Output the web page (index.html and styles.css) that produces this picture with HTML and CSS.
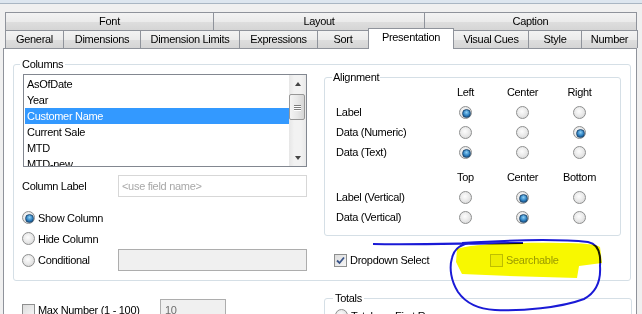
FILE: index.html
```html
<!DOCTYPE html>
<html>
	<head>
		<meta charset="UTF-8">
		<title>Chart Properties</title>
		<link rel="stylesheet" href="styles.css">
	</head>
	<body>
	<div class="shot">
		<div class="frame"></div>

		<div class="tabs">
			<div class="tab-row">
				<div class="tab w-font">Font</div>
				<div class="tab w-layout">Layout</div>
				<div class="tab w-caption">Caption</div>
			</div>
			<div class="tab-row lower">
				<div class="tab w-general">General</div>
				<div class="tab w-dim">Dimensions</div>
				<div class="tab w-limits">Dimension Limits</div>
				<div class="tab w-expr">Expressions</div>
				<div class="tab w-sort">Sort</div>
				<div class="tab w-pres active">Presentation</div>
				<div class="tab w-cues">Visual Cues</div>
				<div class="tab w-style">Style</div>
				<div class="tab w-number">Number</div>
			</div>
		</div>

		<div class="panel">
			<fieldset class="group columns">
				<legend>Columns</legend>
				<div class="group-body">
					<!-- 左侧：字段列表 -->
					<div class="col-left">
						<div class="listbox">
							<ul class="items">
								<li>AsOfDate</li>
								<li>Year</li>
								<li class="selected">Customer Name</li>
								<li>Current Sale</li>
								<li>MTD</li>
								<li>MTD-new</li>
							</ul>
							<div class="vscroll">
								<div class="sbtn up"></div>
								<div class="track"><div class="thumb"><i></i><i></i><i></i></div></div>
								<div class="sbtn down"></div>
							</div>
						</div>

						<div class="field-row label-row">
							<span class="field-name">Column Label</span>
							<div class="textbox hint">&lt;use field name&gt;</div>
						</div>

						<div class="opt first-opt"><span class="radio on"></span>Show Column</div>
						<div class="opt"><span class="radio"></span>Hide Column</div>
						<div class="opt cond">
							<span class="opt-label"><span class="radio"></span>Conditional</span>
							<div class="textbox grey"></div>
						</div>
					</div>

					<!-- 右侧：对齐方式 -->
					<div class="col-right">
						<fieldset class="group align">
							<legend>Alignment</legend>
							<div class="align-grid">
								<span></span><span class="head">Left</span><span class="head">Center</span><span class="head">Right</span>
								<span class="rowname">Label</span><span class="cell"><span class="radio on"></span></span><span class="cell"><span class="radio"></span></span><span class="cell"><span class="radio"></span></span>
								<span class="rowname">Data (Numeric)</span><span class="cell"><span class="radio"></span></span><span class="cell"><span class="radio"></span></span><span class="cell"><span class="radio on"></span></span>
								<span class="rowname">Data (Text)</span><span class="cell"><span class="radio on"></span></span><span class="cell"><span class="radio"></span></span><span class="cell"><span class="radio"></span></span>
							</div>
							<div class="align-grid second">
								<span></span><span class="head">Top</span><span class="head">Center</span><span class="head">Bottom</span>
								<span class="rowname">Label (Vertical)</span><span class="cell"><span class="radio"></span></span><span class="cell"><span class="radio on"></span></span><span class="cell"><span class="radio"></span></span>
								<span class="rowname">Data (Vertical)</span><span class="cell"><span class="radio"></span></span><span class="cell"><span class="radio on"></span></span><span class="cell"><span class="radio"></span></span>
							</div>
						</fieldset>

						<div class="checks">
							<div class="check first">
								<span class="box on"><svg width="11" height="11" viewBox="0 0 11 11"><path d="M2 5.5 L4.5 8 L9 2.5" fill="none" stroke="#3a5488" stroke-width="1.8"/></svg></span>Dropdown Select
							</div>
							<div class="check disabled"><span class="box"></span>Searchable</div>
						</div>
					</div>
				</div>
			</fieldset>

			<div class="bottom">
				<div class="max-row">
					<div class="check max-label"><span class="box"></span>Max Number (1 - 100)</div>
					<div class="textbox grey num">10</div>
				</div>
				<fieldset class="group totals">
					<legend>Totals</legend>
					<div class="opt"><span class="radio"></span>Totals on First Row</div>
				</fieldset>
			</div>
		</div>

		<!-- 截图上的手绘标注 -->
		<svg class="markup pen" width="642" height="314" viewBox="0 0 642 314">
			<path d="M373 244 C420 245 470 243 523 243" fill="none" stroke="#1a1ad6" stroke-width="2.2"/>
			<path d="M462 243 C510 240 560 239 588 242 C599 244 601 254 600 266 C601 281 597 292 584 299 C560 308 522 311 495 310 C476 309 465 302 458 292 C451 281 449 268 452 258 C454 250 458 246 468 243" fill="none" stroke="#1a1ad6" stroke-width="2"/>
		</svg>
		<svg class="markup marker" width="642" height="314" viewBox="0 0 642 314">
			<path d="M457 249 C470 244 520 242 560 243 C582 243 596 244 600 247 L602 263 L579 266 L577 278 C540 277 500 276 462 274 L456 262 Z" fill="#f8f800"/>
		</svg>
	</div>
	</body>
</html>
```

FILE: styles.css
```css
*{
	box-sizing: border-box;
}
body{
	margin: 0;
	background: #f0f0f0;
	font: 11px "Liberation Sans", Arial, sans-serif;
	letter-spacing: -0.3px;
	color: #000;
	overflow: hidden;
}
.shot{
	position: relative;
	width: 642px;
	height: 314px;
	overflow: hidden;
}
.frame{
	height: 4px;
	background: #dde6ef;
	border-bottom: 1px solid #a9b6c3;
}

/* 标签页 */
.tabs{
	margin: 8px 0 0 5px;
}
.tab-row{
	display: flex;
	align-items: flex-end;
	height: 18px;
}
.tab{
	flex: none;
	height: 18px;
	line-height: 17px;
	text-align: center;
	border: 1px solid #8f939b;
	border-bottom: none;
	background: linear-gradient(#f3f3f3, #ebebeb 50%, #dedede 51%, #d5d5d5);
	margin-left: -1px;
	white-space: nowrap;
}
.tab:first-child{
	margin-left: 0;
}
.tab-row.lower .tab.active{
	position: relative;
	height: 21px;
	margin-bottom: -1px;
	line-height: 17px;
	background: #fff;
}
.w-font{ width: 209px; }
.w-layout{ width: 212px; }
.w-caption{ width: 213px; }
.w-general{ width: 59px; }
.w-dim{ width: 78px; }
.w-limits{ width: 100px; }
.w-expr{ width: 79px; }
.w-sort{ width: 52px; }
.w-pres{ width: 86px; }
.w-cues{ width: 76px; }
.w-style{ width: 54px; }
.w-number{ width: 57px; }

/* 面板 */
.panel{
	margin-left: 3px;
	width: 634px;
	height: 280px;
	background: #fff;
	border: 1px solid #8f939b;
	padding: 9px 0 0 9px;
	overflow: hidden;
}
fieldset.group{
	margin: 0;
	padding: 0;
	min-width: 0;
	border: 1px solid #d5dfe6;
	border-radius: 3px;
}
fieldset.group legend{
	padding: 0 2px;
	margin-left: -2px;
	line-height: 12px;
}
.columns{
	width: 618px;
	padding: 0 9px 9px 8px !important;
}
.group-body{
	display: flex;
	gap: 17px;
}
.col-left{
	width: 285px;
}

/* 列表框 */
.listbox{
	display: flex;
	margin: 4px 0 0 1px;
	height: 93px;
	border: 1px solid #828790;
}
.items{
	flex: 1;
	list-style: none;
	margin: 0;
	padding: 1px 0 0 1px;
	overflow: hidden;
}
.items li{
	height: 16px;
	line-height: 16px;
	padding-left: 2px;
	white-space: nowrap;
}
.items li.selected{
	background: #3399ff;
	color: #fff;
}
.vscroll{
	width: 17px;
	display: flex;
	flex-direction: column;
	background: linear-gradient(90deg, #e6e6e6, #f2f2f2 30%, #f2f2f2 70%, #e9e9e9);
}
.sbtn{
	height: 17px;
	display: flex;
	align-items: center;
	justify-content: center;
}
.sbtn::before{
	content: "";
	border-left: 3.5px solid transparent;
	border-right: 3.5px solid transparent;
}
.sbtn.up::before{
	border-bottom: 4px solid #444;
}
.sbtn.down::before{
	border-top: 4px solid #444;
}
.track{
	flex: 1;
	padding: 2px 1px 0 0;
}
.thumb{
	height: 26px;
	border: 1px solid #979797;
	border-radius: 2px;
	background: linear-gradient(90deg, #f4f4f4, #e8e8e8 50%, #d6d6d6);
	display: flex;
	flex-direction: column;
	align-items: center;
	justify-content: center;
	gap: 1px;
}
.thumb i{
	display: block;
	width: 7px;
	height: 1px;
	background: #7d7d7d;
	box-shadow: 0 1px 0 #fff;
}

/* 字段行 */
.field-row{
	display: flex;
	align-items: center;
}
.label-row{
	margin-top: 8px;
}
.field-name{
	width: 96px;
}
.textbox{
	height: 22px;
	line-height: 20px;
	border: 1px solid #d7d7d7;
	padding-left: 3px;
	background: #fff;
}
.label-row .textbox,
.cond .textbox{
	width: 189px;
}
.textbox.hint{
	color: #a8a8a8;
}
.textbox.grey{
	background: #f0f0f0;
	border-color: #adadad;
	color: #6d6d6d;
}
.opt{
	display: flex;
	align-items: center;
	height: 21px;
	white-space: nowrap;
}
.opt.first-opt{
	margin-top: 10px;
}
.opt.cond{
	height: 22px;
}
.opt-label{
	display: flex;
	align-items: center;
	width: 96px;
}

/* 单选框和复选框 */
.radio{
	flex: none;
	position: relative;
	display: inline-block;
	width: 13px;
	height: 13px;
	border-radius: 50%;
	border: 1px solid #8e8f8f;
	background: radial-gradient(circle at 45% 40%, #fdfdfd, #e9e9e9 50%, #cfcfcf);
	margin-right: 3px;
}
.radio.on::after{
	content: "";
	position: absolute;
	left: 2px;
	top: 2px;
	width: 7px;
	height: 7px;
	border-radius: 50%;
	background: radial-gradient(circle at 50% 35%, #8fd0f5, #2c7fc0 55%, #0d3f72);
	border: 1px solid #234d74;
}
.box{
	flex: none;
	display: inline-flex;
	align-items: center;
	justify-content: center;
	width: 13px;
	height: 13px;
	border: 1px solid #8e8f8f;
	background: linear-gradient(135deg, #dcdcdc, #f6f6f6);
	margin-right: 3px;
}
.check{
	display: flex;
	align-items: center;
	height: 14px;
	white-space: nowrap;
}

/* 对齐 */
.col-right{
	width: 305px;
}
.align{
	width: 297px;
	margin-top: 1px !important;
	padding: 0 0 8px 11px !important;
}
.align legend{
	margin-left: -4px !important;
	padding: 0 1px !important;
}
.align-grid{
	display: grid;
	grid-template-columns: 101px 57px 57px 57px;
	grid-auto-rows: 20px;
	align-items: center;
	margin-top: -1px;
}
.align-grid.second{
	margin-top: 5px;
}
.head,
.cell{
	text-align: center;
	line-height: 13px;
}
.cell .radio{
	margin: 0;
	vertical-align: middle;
}
.rowname{
	white-space: nowrap;
}
.checks{
	display: flex;
	margin: 17px 0 0 10px;
}
.check.first{
	width: 156px;
}
.check.disabled{
	color: #a0a0a0;
}
.check.disabled .box{
	border-color: #c4c4c4;
	background: #f4f4f4;
}

/* 底部 */
.bottom{
	display: flex;
	margin-top: 11px;
}
.max-row{
	width: 311px;
	display: flex;
	align-items: center;
	padding: 6px 0 0 9px;
	height: 30px;
}
.max-label{
	width: 138px;
}
.textbox.num{
	width: 66px;
	padding-left: 4px;
}
.totals{
	width: 308px;
	padding: 0 0 0 10px !important;
}
.totals .opt{
	margin-top: 1px;
}

/* 标注 */
.markup{
	position: absolute;
	left: 0;
	top: 0;
	pointer-events: none;
}
.marker{
	mix-blend-mode: multiply;
}
```
